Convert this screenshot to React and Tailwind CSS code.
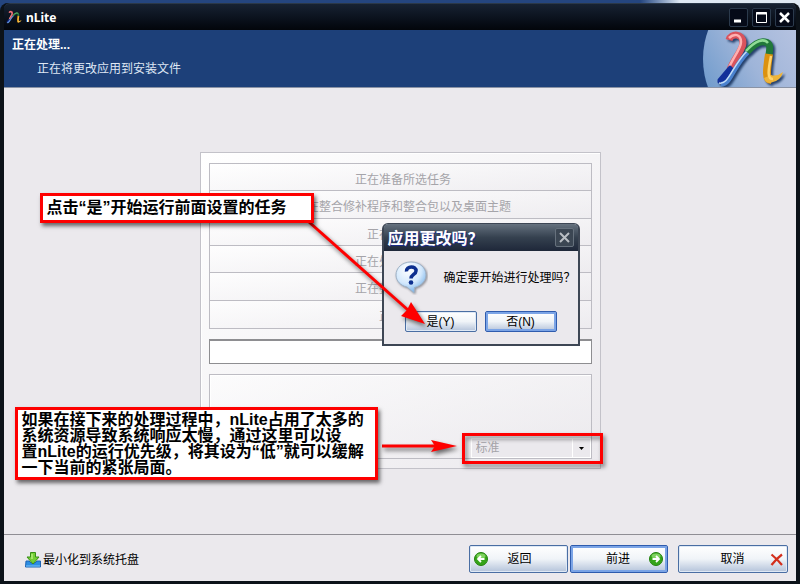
import { useState } from "react";

const TASKS = [
  "正在准备所选任务",
  "正在整合修补程序和整合包以及桌面主题",
  "正在整合驱动",
  "正在处理所选组件",
  "正在整理安装文件",
  "正在清理",
];

const XP_BUTTON =
  "rounded-xs border border-[#4a6ea3] bg-linear-to-b from-white via-[#f0f4f8] to-[#b4c3da] text-xs text-black shadow-[inset_0_0_0_1px_#dfe9f5]";
const XP_BUTTON_ACTIVE =
  "rounded-xs border border-[#2f5cae] bg-linear-to-b from-white via-[#f0f4f8] to-[#b4c3da] text-xs text-black shadow-[inset_0_0_0_2px_#7ba4e6]";

// ─── Drawings ────────────────────────────────────────────────────────────────
function RibbonN() {
  return (
    <g fill="none" strokeLinejoin="round">
      <path d="M26 10C28 3 40 3 40 13C40 20 30 30 27 40" stroke="#d9535c" strokeWidth="7" />
      <path d="M26 8C31 3 38 4 38 12C38 19 29 29 26 38" stroke="#ffb0b0" strokeWidth="2.500" />
      <path d="M27 37L31 41L23 53L16 52L16 50Z" fill="#12309a" stroke="#12309a" strokeWidth="3" />
      <path d="M18 54C28 55 29 37 46 21" stroke="#4a82cf" strokeWidth="4.500" />
      <path d="M16 53C26 55 28 37 45 20" stroke="#c3dcf6" strokeWidth="1.500" />
      <path d="M44 22C52 13 58 11 62 12C68 13 67 18 66 25" stroke="#21793a" strokeWidth="7" />
      <path d="M43 21C53 10 61 8 65 13" stroke="#8fdc95" strokeWidth="2.500" />
      <path d="M66 24C64 38 62 50 68 50" stroke="#dc920f" strokeWidth="8" />
      <path d="M61 48Q63 55 70 52Q78 50 80 42Q74 47 68 45Z" fill="#eeb43a" />
      <path d="M68 26C65 41 64 49 70 49" stroke="#ffd46c" strokeWidth="2.500" />
    </g>
  );
}

function BannerLogo() {
  return (
    <svg width="93" height="57" viewBox="0 0 93 57" aria-hidden="true">
      <defs>
        <linearGradient id="lens" x1="93" y1="0" x2="0" y2="57" gradientUnits="userSpaceOnUse">
          <stop offset="0" stopColor="#b5c2e0" />
          <stop offset="0.5" stopColor="#9fb5d9" />
          <stop offset="1" stopColor="#6f9bcc" />
        </linearGradient>
      </defs>
      <circle cx="83" cy="29" r="83" fill="url(#lens)" />
      <g className="drop-shadow-[2px_2px_1px_#24406b]">
        <RibbonN />
      </g>
    </svg>
  );
}

function QuestionBubble() {
  return (
    <svg width="34" height="34" viewBox="0 0 34 34" aria-hidden="true">
      <defs>
        <radialGradient id="bubble" cx="0.4" cy="0.25" r="0.75">
          <stop offset="0" stopColor="#ffffff" />
          <stop offset="0.6" stopColor="#d3e8fc" />
          <stop offset="1" stopColor="#79b3ea" />
        </radialGradient>
      </defs>
      <path
        d="M17 1C8 1 2 7 2 14C2 20 7 25 13 26L20 32L20.500 26.500C27 25 32 20 32 14C32 7 26 1 17 1Z"
        fill="url(#bubble)"
        stroke="#9fb2c6"
        className="drop-shadow-[1px_1px_1px_#8c8c94]"
      />
      <path
        d="M12.500 10.500C12 4.500 22.500 4.500 22 10C22 13.500 17 13.500 17 17.500"
        fill="none"
        stroke="#0c2f8f"
        strokeWidth="3.500"
      />
      <circle cx="17" cy="21.500" r="2.300" fill="#0c2f8f" />
    </svg>
  );
}

function RoundArrow({ flip }) {
  return (
    <svg width="14" height="14" viewBox="0 0 14 14" className={flip ? "rotate-180" : ""} aria-hidden="true">
      <circle cx="7" cy="7" r="6.500" fill="#35a419" stroke="#23800f" />
      <ellipse cx="7" cy={flip ? 10 : 4} rx="4.500" ry="2.500" fill="#7ed25f" />
      <path d="M10.500 7H4M7 4L4 7L7 10" fill="none" stroke="#fff" strokeWidth="1.800" />
    </svg>
  );
}

function TrayIcon() {
  return (
    <svg width="16" height="16" viewBox="0 0 16 16" aria-hidden="true">
      <path d="M1 9H4L6 11H10L12 9H15.500V15H0.500Z" fill="#2c8de2" stroke="#1c64b4" />
      <path d="M1 14H15" stroke="#7cc4fa" />
      <path d="M5.500 0.500H10.500V5H14L8 12L2 5H5.500Z" fill="#74cf35" stroke="#378f16" />
      <path d="M7 2V7" stroke="#b6ee7d" strokeWidth="1.500" />
    </svg>
  );
}

// ─── Window parts ────────────────────────────────────────────────────────────
function TitleBar() {
  const button =
    "flex h-[19px] w-[19px] items-center justify-center rounded-xs border border-[#2b3a4c] bg-[#050a18]";
  return (
    <header className="flex h-[27px] items-center rounded-t-md border-t border-[#2b3848] bg-linear-to-b from-[#172232] via-[#0c131f] to-[#03060b] pr-0.5 pl-0.5">
      <svg width="16" height="14" viewBox="12 0 70 57" aria-hidden="true">
        <RibbonN />
      </svg>
      <h1 className="ml-1 flex-1 pt-0.5 font-['Noto_Sans',sans-serif] text-xs font-bold text-white">nLite</h1>
      <div className="flex gap-1">
        <button className={button} aria-label="最小化">
          <svg width="13" height="13"><path d="M2 10H9" stroke="#fff" strokeWidth="3" /></svg>
        </button>
        <button className={button} aria-label="最大化">
          <svg width="13" height="13">
            <path d="M1.500 1.500H11.500V11.500H1.500Z" fill="#050a18" stroke="#fff" />
            <path d="M1 2.500H12" stroke="#fff" strokeWidth="2" />
          </svg>
        </button>
        <button className={button} aria-label="关闭">
          <svg width="13" height="13"><path d="M2 2L11 11M11 2L2 11" stroke="#fff" strokeWidth="2.500" /></svg>
        </button>
      </div>
    </header>
  );
}

function ConfirmDialog() {
  return (
    <section
      role="dialog"
      aria-labelledby="confirm-title"
      className="absolute top-[70px] left-[181px] h-[123px] w-[198px] rounded-t-md border-2 border-t border-[#3d4654] bg-[#ebe9ed]"
    >
      <div className="flex h-[27px] items-center justify-between rounded-t-sm bg-linear-to-b from-[#66727f] via-[#35414f] to-[#1e2739] pr-1 pl-1">
        <h2 id="confirm-title" className="pt-0.5 text-base leading-6 font-bold text-white [text-shadow:1px_1px_0_#1a2c8c]">
          应用更改吗？
        </h2>
        <button
          aria-label="关闭"
          className="flex h-[19px] w-[19px] items-center justify-center rounded-xs border border-[#66717d] bg-[#3b4653]"
        >
          <svg width="13" height="13"><path d="M2 2L11 11M11 2L2 11" stroke="#b9bec4" strokeWidth="2" /></svg>
        </button>
      </div>
      <div className="flex items-center pt-2.5 pl-2.5">
        <QuestionBubble />
        <p className="ml-4 text-xs whitespace-nowrap text-black">确定要开始进行处理吗？</p>
      </div>
      <div className="mt-4 flex gap-2 pl-[21px]">
        <button className={`${XP_BUTTON} h-[21px] w-[72px]`}>是(Y)</button>
        <button className={`${XP_BUTTON_ACTIVE} h-[21px] w-[72px]`}>否(N)</button>
      </div>
    </section>
  );
}

const CALLOUT =
  "absolute border-[3px] border-[#fe0000] bg-white font-bold text-base text-black whitespace-nowrap shadow-[2px_3px_4px_#00000090]";

function Annotations() {
  return (
    <>
      <svg
        width="260"
        height="310"
        viewBox="0 0 260 310"
        className="pointer-events-none absolute top-0 left-0 drop-shadow-[2px_3px_2px_#00000090]"
        aria-hidden="true"
      >
        <path d="M108 69L207 157" stroke="#fe0000" strokeWidth="3" />
        <path d="M224 171L200 163L206 157L210 149Z" fill="#fe0000" />
        <path d="M181 293H238" stroke="#fe0000" strokeWidth="3" />
        <path d="M256 293L230 299L234 293L230 287Z" fill="#fe0000" />
      </svg>
      <p className={`${CALLOUT} top-10 left-[-161px] h-[30px] w-[274px] pl-1 leading-6`}>
        点击“是”开始运行前面设置的任务
      </p>
      <p className={`${CALLOUT} top-[254px] left-[-186px] w-[363px] pt-0.5 pb-px pl-1 leading-4`}>
        如果在接下来的处理过程中，nLite占用了太多的
        <br />
        系统资源导致系统响应太慢，通过这里可以设
        <br />
        置nLite的运行优先级，将其设为“低”就可以缓解
        <br />
        一下当前的紧张局面。
      </p>
      <div className="pointer-events-none absolute top-[280px] left-[261px] h-[31px] w-[141px] border-[3px] border-[#fe0000] drop-shadow-[2px_3px_2px_#00000080]" />
    </>
  );
}

export default function App() {
  const [priority, setPriority] = useState("normal");

  return (
    <div className="flex min-h-screen flex-col bg-linear-to-r from-[#24457f] from-80% to-[#dfe9f3] to-85% pt-[3px] font-['Liberation_Sans','Noto_Sans_CJK_SC',sans-serif]">
      <div className="flex flex-1 flex-col rounded-t-lg border-x-4 border-b-[3px] border-[#0c1219] bg-[#0c1219]">
        <TitleBar />

        <div className="flex h-[58px] items-start justify-between border-b border-[#8a93a5] bg-[#1d4079] text-white">
          <div className="pt-1.5 pl-2">
            <h2 className="text-xs leading-[18px] font-bold">正在处理...</h2>
            <p className="mt-1.5 pl-[25px] text-xs leading-[18px] text-[#dfe7f4]">正在将更改应用到安装文件</p>
          </div>
          <BannerLogo />
        </div>

        <main className="flex flex-1 items-start justify-center bg-[#ebe9ed] pt-16 pb-16">
          <div className="relative flex w-[401px] flex-col gap-2.5 border border-[#c3c2c9] bg-linear-to-br from-white to-[#ebe9ed] px-2 pt-2.5 pb-[9px] shadow-[inset_1px_1px_0_#fff]">
            <ul className="grid h-[166px] grid-rows-6 border border-[#bdbcc3] text-xs text-[#a5a4a9]">
              {TASKS.map((task) => (
                <li
                  key={task}
                  className="flex items-center justify-center border-b border-[#bdbcc3] bg-linear-to-br from-white/60 to-[#ebe9ed]/60 pt-1.5 pl-1.5 last:border-b-0"
                >
                  {task}
                </li>
              ))}
            </ul>

            <div
              role="progressbar"
              aria-label="处理进度"
              className="h-[25px] border border-t-2 border-[#8e8e91] bg-white"
            />

            <div className="flex h-[85px] items-end justify-end border border-[#bdbcc3] bg-linear-to-br from-white/60 to-[#ebe9ed]/60 shadow-[inset_1px_1px_0_#fff]">
              <div className="flex h-5 w-[120px] items-stretch border border-white bg-[#ebe9ed]">
                <select
                  aria-label="优先级"
                  value={priority}
                  onChange={(e) => setPriority(e.target.value)}
                  className="w-full appearance-none pl-1 text-xs text-[#a5a4a9]"
                >
                  <option value="normal">标准</option>
                  <option value="low">低</option>
                </select>
                <span className="pointer-events-none flex w-[18px] shrink-0 items-center justify-center border-l border-white">
                  <svg width="5" height="3"><path d="M0 0H5L2.500 3Z" fill="#000" /></svg>
                </span>
              </div>
            </div>

            <ConfirmDialog />
            <Annotations />
          </div>
        </main>

        <footer className="flex h-[47px] items-center justify-between border-t border-[#8f8e94] bg-[#ebe9ed] pr-2 pl-[21px]">
          <button className="flex items-center gap-0.5 pt-1 text-xs text-black">
            <TrayIcon />
            最小化到系统托盘
          </button>
          <div className="flex pt-0.5">
            <button className={`${XP_BUTTON} flex h-7 w-[99px] items-center px-1`}>
              <RoundArrow />
              <span className="flex-1 pr-3">返回</span>
            </button>
            <button className={`${XP_BUTTON_ACTIVE} ml-0.5 flex h-7 w-[98px] items-center px-1`}>
              <span className="flex-1 pl-3">前进</span>
              <RoundArrow flip />
            </button>
            <button className={`${XP_BUTTON} ml-2.5 flex h-7 w-[110px] items-center px-1`}>
              <span className="flex-1 pl-3">取消</span>
              <svg width="13" height="13" aria-hidden="true">
                <path d="M1.500 1.500Q7 6 12 12M12 1.500Q6 6 1.500 12" fill="none" stroke="#d32f1d" strokeWidth="2.200" />
              </svg>
            </button>
          </div>
        </footer>
      </div>
    </div>
  );
}
